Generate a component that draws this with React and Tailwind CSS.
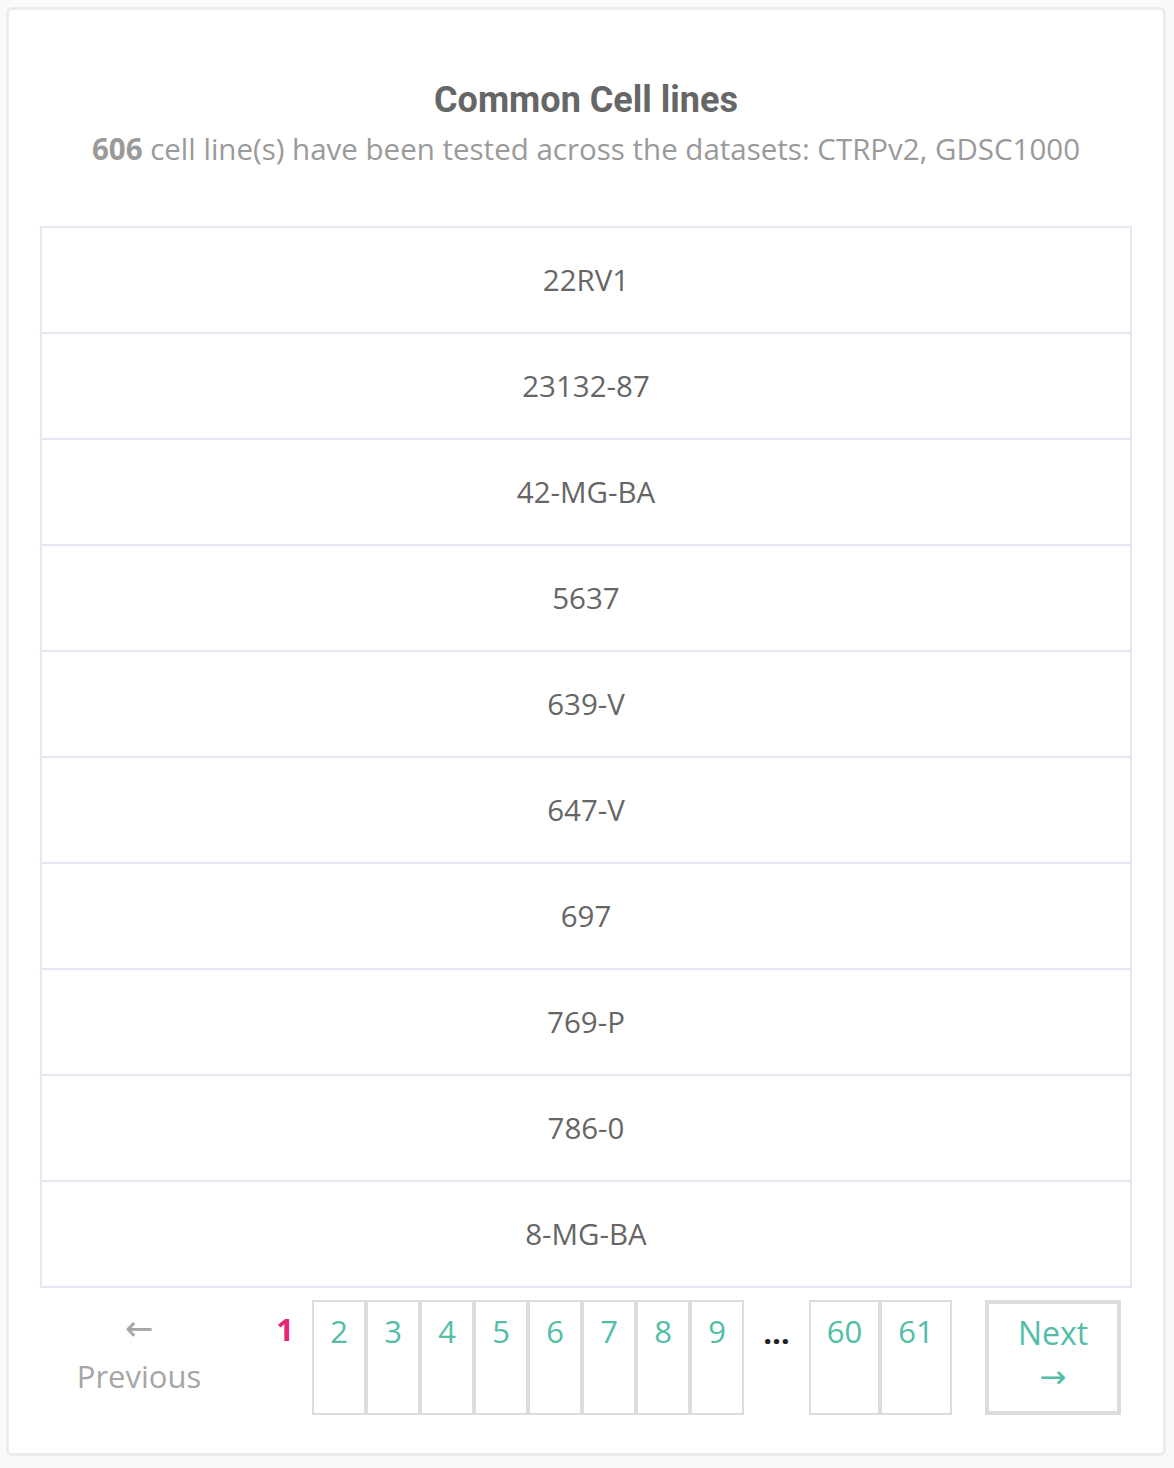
import React from 'react';

const cellLines = ['22RV1', '23132-87', '42-MG-BA', '5637', '639-V', '647-V', '697', '769-P', '786-0', '8-MG-BA'];
const pages = ['2', '3', '4', '5', '6', '7', '8', '9'];

const body = { fontFamily: '"Open Sans", "Noto Sans", sans-serif' };
const arrow = { fontFamily: '"DejaVu Sans", sans-serif' };

export default function App() {
  return (
    <div className="min-h-[1468px] bg-[#fafafa] pl-[6px] pr-[8px] pt-[7px]" style={body}>
      <div className="h-[1449px] rounded-[6px] border-[3px] border-[#ececec] bg-white pl-[31px] pr-[31px]">
        <div className="pt-[66px] text-center">
          <h2 className="text-[36px] leading-[48px] font-bold text-[#666666]" style={{ fontFamily: 'Roboto, sans-serif' }}>
            Common Cell lines
          </h2>
          <p className="mt-[5px] text-[29.5px] leading-[40px] text-[#9a9a9a]">
            <span className="font-bold">606</span> cell line(s) have been tested across the datasets: CTRPv2, GDSC1000
          </p>
        </div>

        <div className="mt-[57px] border-2 border-[#e7e6f3]">
          {cellLines.map((name, i) => (
            <div
              key={name}
              className={`flex items-center justify-center text-[29.5px] text-[#666666] ${i > 0 ? 'h-[106px] border-t-2 border-[#e7e6f3]' : 'h-[104px]'}`}
            >
              {name}
            </div>
          ))}
        </div>

        <div className="mt-[12px] flex items-start text-[31px] leading-[36px]">
          <div className="flex w-[198px] flex-col items-center pt-[10px] text-[#a6a6a6]">
            <span className="text-[34px] leading-[36px]" style={arrow}>←</span>
            <span className="mt-[12px] text-[31px] leading-[36px]">Previous</span>
          </div>
          <div className="ml-[20px] w-[54px] pt-[11px] text-center font-bold text-[#e8247a]">1</div>
          {pages.map((p) => (
            <div key={p} className="h-[115px] w-[54px] border-2 border-[#dcdcdc] pt-[11px] text-center text-[#52bea6]">
              {p}
            </div>
          ))}
          <div className="w-[65px] pt-[14px] text-center font-bold text-[#222222]">…</div>
          <div className="h-[115px] w-[71px] border-2 border-[#dcdcdc] pt-[11px] text-center text-[#52bea6]">60</div>
          <div className="h-[115px] w-[72px] border-2 border-[#dcdcdc] pt-[11px] text-center text-[#52bea6]">61</div>
          <div className="ml-[33px] flex h-[115px] w-[136px] flex-col items-center border-4 border-[#dcdcdc] pt-[11px] text-[#52bea6]">
            <span className="text-[32px] leading-[36px]">Next</span>
            <span className="mt-[8px] text-[32px] leading-[36px]" style={arrow}>→</span>
          </div>
        </div>
      </div>
    </div>
  );
}
